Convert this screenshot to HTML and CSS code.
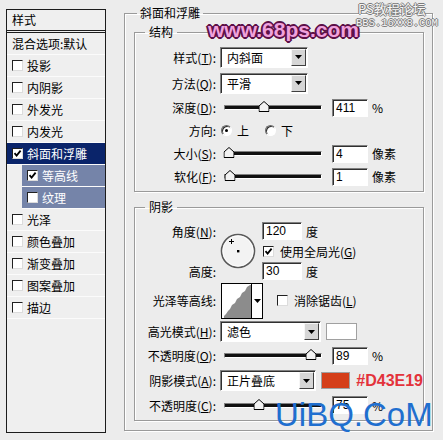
FILE: index.html
```html
<!DOCTYPE html>
<html>
<head>
    <title>图层样式</title>
    <link rel="stylesheet" href="styles.css">
</head>
<body>
<div class="dialog">
    <ul class="style-list">
        <li class="list-head">样式</li>
        <li class="item">混合选项:默认</li>
        <li class="item"><span class="cb"></span>投影</li>
        <li class="item"><span class="cb"></span>内阴影</li>
        <li class="item"><span class="cb"></span>外发光</li>
        <li class="item"><span class="cb"></span>内发光</li>
        <li class="item selected"><span class="cb"><svg width="9" height="9" viewBox="0 0 9 9"><path d="M1.5 4.2 L3.6 6.6 L7.6 1.6" fill="none" stroke="#000" stroke-width="1.8"/></svg></span>斜面和浮雕</li>
        <li class="item sub"><span class="cb"><svg width="9" height="9" viewBox="0 0 9 9"><path d="M1.5 4.2 L3.6 6.6 L7.6 1.6" fill="none" stroke="#000" stroke-width="1.8"/></svg></span>等高线</li>
        <li class="item sub"><span class="cb"></span>纹理</li>
        <li class="item"><span class="cb"></span>光泽</li>
        <li class="item"><span class="cb"></span>颜色叠加</li>
        <li class="item"><span class="cb"></span>渐变叠加</li>
        <li class="item"><span class="cb"></span>图案叠加</li>
        <li class="item"><span class="cb"></span>描边</li>
    </ul>

    <fieldset class="group outer">
        <legend>斜面和浮雕</legend>

        <fieldset class="group inner struct">
            <legend>结构</legend>
            <div class="row tall">
                <label class="lbl">样式(<u>T</u>):</label>
                <div class="select"><span>内斜面</span><i class="drop"><svg width="7" height="4" viewBox="0 0 7 4"><path d="M0 0 H7 L3.5 4 Z"/></svg></i></div>
            </div>
            <div class="row tall">
                <label class="lbl">方法(<u>Q</u>):</label>
                <div class="select"><span>平滑</span><i class="drop"><svg width="7" height="4" viewBox="0 0 7 4"><path d="M0 0 H7 L3.5 4 Z"/></svg></i></div>
            </div>
            <div class="row">
                <label class="lbl">深度(<u>D</u>):</label>
                <div class="slider"><svg class="thumb" style="left: 41%" width="11" height="11" viewBox="0 0 11 11"><path d="M0.5 10.5 V5 L5.5 0.5 L10.5 5 V10.5 Z" fill="#f2f2f2" stroke="#000"/></svg></div>
                <span class="field">411</span>
                <span class="unit">%</span>
            </div>
            <div class="row">
                <label class="lbl">方向:</label>
                <span class="radio on"></span><span class="radio-text">上</span>
                <span class="radio"></span><span class="radio-text">下</span>
            </div>
            <div class="row">
                <label class="lbl">大小(<u>S</u>):</label>
                <div class="slider"><svg class="thumb" style="left: 4%" width="11" height="11" viewBox="0 0 11 11"><path d="M0.5 10.5 V5 L5.5 0.5 L10.5 5 V10.5 Z" fill="#f2f2f2" stroke="#000"/></svg></div>
                <span class="field">4</span>
                <span class="unit">像素</span>
            </div>
            <div class="row">
                <label class="lbl">软化(<u>F</u>):</label>
                <div class="slider"><svg class="thumb" style="left: 5%" width="11" height="11" viewBox="0 0 11 11"><path d="M0.5 10.5 V5 L5.5 0.5 L10.5 5 V10.5 Z" fill="#f2f2f2" stroke="#000"/></svg></div>
                <span class="field">1</span>
                <span class="unit">像素</span>
            </div>
        </fieldset>

        <fieldset class="group inner shade">
            <legend>阴影</legend>
            <div class="angle">
                <label class="lbl angle-lbl">角度(<u>N</u>):</label>
                <svg class="dial" width="36" height="36" viewBox="0 0 36 36">
                    <circle cx="18" cy="18" r="16.5" fill="#f3f3f3" stroke="#5a5a5a" stroke-width="1.6"/>
                    <circle cx="18" cy="18" r="15.2" fill="none" stroke="#ffffff" stroke-width="0.8"/>
                    <rect x="17" y="17" width="2.4" height="2.4" fill="#000"/>
                    <path d="M9 8.5 H14 M11.5 6 V11" stroke="#000" stroke-width="1"/>
                </svg>
                <div class="angle-val"><span class="field short">120</span><span class="unit">度</span></div>
                <div class="angle-check"><span class="cb"><svg width="9" height="9" viewBox="0 0 9 9"><path d="M1.5 4.2 L3.6 6.6 L7.6 1.6" fill="none" stroke="#000" stroke-width="1.8"/></svg></span><span>使用全局光(<u>G</u>)</span></div>
                <label class="lbl height-lbl">高度:</label>
                <div class="height-val"><span class="field short">30</span><span class="unit">度</span></div>
            </div>
            <div class="row contour">
                <label class="lbl">光泽等高线:</label>
                <div class="contour-box">
                    <svg width="29" height="34" viewBox="0 0 29 34"><path d="M2 34 V32 L4 30 L6 27 L8 25 L10 21 L13 19 L15 15 L18 13 L20 9 L23 7 L25 3 L28 1 L29 1 V34 Z" fill="#8c8c8c"/></svg>
                    <i class="contour-drop"><svg width="7" height="4" viewBox="0 0 7 4"><path d="M0 0 H7 L3.5 4 Z"/></svg></i>
                </div>
                <span class="cb gap"></span><span>消除锯齿(<u>L</u>)</span>
            </div>
            <div class="row">
                <label class="lbl">高光模式(<u>H</u>):</label>
                <div class="select wide"><span>滤色</span><i class="drop"><svg width="7" height="4" viewBox="0 0 7 4"><path d="M0 0 H7 L3.5 4 Z"/></svg></i></div>
                <span class="swatch light"></span>
            </div>
            <div class="row roomy">
                <label class="lbl">不透明度(<u>O</u>):</label>
                <div class="slider"><svg class="thumb" style="left: 90%" width="11" height="11" viewBox="0 0 11 11"><path d="M0.5 10.5 V5 L5.5 0.5 L10.5 5 V10.5 Z" fill="#f2f2f2" stroke="#000"/></svg></div>
                <span class="field">89</span>
                <span class="unit">%</span>
            </div>
            <div class="row roomy">
                <label class="lbl">阴影模式(<u>A</u>):</label>
                <div class="select wide"><span>正片叠底</span><i class="drop"><svg width="7" height="4" viewBox="0 0 7 4"><path d="M0 0 H7 L3.5 4 Z"/></svg></i></div>
                <span class="swatch red"></span>
                <span class="hex">#D43E19</span>
            </div>
            <div class="row last">
                <label class="lbl">不透明度(<u>C</u>):</label>
                <div class="slider"><svg class="thumb" style="left: 35%" width="11" height="11" viewBox="0 0 11 11"><path d="M0.5 10.5 V5 L5.5 0.5 L10.5 5 V10.5 Z" fill="#f2f2f2" stroke="#000"/></svg></div>
                <span class="field">75</span>
                <span class="unit">%</span>
            </div>
        </fieldset>
    </fieldset>

    <div class="mark-68ps">www.68ps.com</div>
    <div class="mark-forum">
        <span>PS教程论坛</span>
        <span class="forum-url">BBS.16XX8.COM</span>
    </div>
    <div class="mark-uibq">UiBQ.CoM</div>
</div>
</body>
</html>
```

FILE: styles.css
```css
* {
    box-sizing: border-box;
}

body {
    margin: 0;
    background-color: #ececec;
    font-family: "Noto Sans CJK SC", "Liberation Sans", sans-serif;
    font-size: 12px;
    color: #000000;
}

u {
    text-decoration: underline;
}

.dialog {
    position: relative;
    display: flex;
    align-items: flex-start;
    width: 443px;
    height: 440px;
    padding: 6px 0 0 6px;
    overflow: hidden;
}

/* left list */
.style-list {
    list-style: none;
    margin: 3px 0 0 0;
    padding: 0;
    width: 100px;
    height: 424px;
    flex: none;
    border: 1px solid #1c1c1c;
    background-color: #efefef;
}

.list-head {
    height: 23px;
    line-height: 20px;
    padding-left: 5px;
    border-bottom: 3px double #1c1c1c;
}

.item {
    display: flex;
    align-items: center;
    gap: 4px;
    height: 22px;
    padding-left: 5px;
    border-bottom: 1px solid #fbfbfb;
    white-space: nowrap;
}

.item.selected {
    background-color: #0a246a;
    color: #ffffff;
}

.item.sub {
    margin-left: 15px;
    background-color: #7584a9;
    color: #ffffff;
}

.cb {
    display: inline-flex;
    align-items: center;
    justify-content: center;
    flex: none;
    width: 11px;
    height: 11px;
    background-color: #ffffff;
    border: 1px solid;
    border-color: #202020 #dcdcdc #dcdcdc #202020;
}

/* group boxes */
.group {
    margin: 0;
    min-width: 0;
    border: 1px solid #9a9a9a;
    box-shadow: inset 1px 1px 0 #ffffff, 1px 1px 0 #ffffff;
}

.group legend {
    line-height: 14px;
}

.outer {
    margin-left: 18px;
    width: 309px;
    padding: 0 8px 9px 9px;
}

.outer > legend {
    margin-left: 3px;
    padding: 0 3px;
}

.inner > legend {
    margin-left: 10px;
    padding: 0 4px;
}

.struct {
    margin-top: 5px;
    padding: 5px 0 3px 0;
}

.shade {
    margin-top: 8px;
    padding: 7px 0 3px 0;
}

.row {
    display: flex;
    align-items: center;
    height: 23px;
    white-space: nowrap;
}

.row.tall {
    height: 26px;
}

.row.roomy {
    height: 25px;
}

.row.last {
    height: 24px;
}

.row.contour {
    height: 39px;
}

.lbl {
    width: 81px;
    margin-right: 4px;
    flex: none;
    text-align: right;
}

/* controls */
.select {
    display: flex;
    align-items: center;
    justify-content: space-between;
    width: 88px;
    height: 21px;
    padding: 0 1px 0 6px;
    background-color: #ffffff;
    border: 1px solid;
    border-color: #808080 #ffffff #ffffff #808080;
    box-shadow: inset 1px 1px 0 #303030;
}

.select.wide {
    width: 101px;
}

.drop {
    display: flex;
    align-items: center;
    justify-content: center;
    width: 15px;
    height: 17px;
    background-color: #d6d6d6;
    border: 1px solid;
    border-color: #f6f6f6 #404040 #404040 #f6f6f6;
}

.slider {
    position: relative;
    width: 98px;
    height: 5px;
    margin-left: 4px;
    background-color: #111111;
    border: 1px solid;
    border-color: #808080 #ffffff #ffffff #808080;
}

.thumb {
    position: absolute;
    bottom: -3px;
    transform: translateX(-50%);
}

.field {
    display: block;
    width: 36px;
    height: 18px;
    margin-left: 10px;
    padding-left: 3px;
    background-color: #ffffff;
    border: 1px solid;
    border-color: #808080 #ffffff #ffffff #808080;
    box-shadow: inset 1px 1px 0 #303030;
    font-family: "Liberation Sans", sans-serif;
    line-height: 16px;
}

.field.short {
    width: 40px;
    margin-left: 0;
}

.unit {
    margin-left: 4px;
}

.radio {
    display: flex;
    align-items: center;
    justify-content: center;
    width: 11px;
    height: 11px;
    margin-left: 1px;
    border-radius: 50%;
    background-color: #ffffff;
    border: 1px solid;
    border-color: #6a6a6a #ffffff #ffffff #6a6a6a;
    box-shadow: inset 1px 1px 0 #303030;
}

.radio.on::after {
    content: "";
    width: 3px;
    height: 3px;
    border-radius: 50%;
    background-color: #000000;
}

.radio-text {
    margin-left: 5px;
    margin-right: 15px;
}

/* angle block */
.angle {
    display: grid;
    grid-template-columns: 85px 42px auto;
    grid-template-rows: 20px 20px 20px;
    align-items: center;
    white-space: nowrap;
}

.angle-lbl {
    grid-column: 1;
    grid-row: 1;
}

.height-lbl {
    grid-column: 1;
    grid-row: 3;
}

.dial {
    grid-column: 2;
    grid-row: 1 / 4;
}

.angle-val,
.height-val {
    display: flex;
    align-items: center;
    grid-column: 3;
}

.angle-val {
    grid-row: 1;
}

.height-val {
    grid-row: 3;
}

.angle-check {
    display: flex;
    align-items: center;
    gap: 6px;
    grid-column: 3;
    grid-row: 2;
    padding-left: 1px;
}

.contour-box {
    display: flex;
    width: 42px;
    height: 36px;
    margin-left: 1px;
    background-color: #ffffff;
    border: 1px solid #000000;
    align-items: flex-end;
}

.contour-drop {
    display: flex;
    align-items: center;
    justify-content: center;
    align-self: stretch;
    width: 11px;
    border-left: 1px solid #000000;
}

.cb.gap {
    margin: 0 6px 0 14px;
}

.swatch {
    width: 31px;
    height: 17px;
    margin-left: 5px;
    border: 1px solid #a0a0a0;
}

.swatch.light {
    background-color: #ffffff;
}

.swatch.red {
    background-color: #d43e19;
}

.hex {
    margin-left: 6px;
    color: #e3323b;
    font-family: "Liberation Sans", sans-serif;
    font-size: 16px;
    font-weight: bold;
}

/* watermarks */
.mark-68ps {
    position: absolute;
    left: 208px;
    top: 19px;
    font-family: "Liberation Sans", sans-serif;
    font-size: 21px;
    font-weight: bold;
    line-height: 21px;
    color: #f0a2dc;
    text-shadow: 1px 1px 0 #5c1048, -1px -1px 0 #5c1048, 1px -1px 0 #5c1048, -1px 1px 0 #5c1048,
        2px 0 0 #5c1048, -2px 0 0 #5c1048, 0 2px 0 #5c1048, 0 -2px 0 #5c1048;
}

.mark-forum {
    position: absolute;
    left: 356px;
    top: 1px;
    display: flex;
    flex-direction: column;
    align-items: flex-start;
    color: #f6f6f6;
    text-shadow: 1px 0 0 #7a7a7a, -1px 0 0 #7a7a7a, 0 1px 0 #7a7a7a, 0 -1px 0 #7a7a7a;
}

.mark-forum span {
    font-size: 13px;
    line-height: 16px;
    padding-left: 2px;
}

.mark-forum .forum-url {
    font-family: "Liberation Mono", monospace;
    font-size: 10.5px;
    line-height: 12px;
    padding-left: 0;
}

.mark-uibq {
    position: absolute;
    left: 275px;
    top: 398px;
    font-family: "Liberation Sans", sans-serif;
    font-size: 33px;
    line-height: 33px;
    color: #1f6fcf;
}
```
